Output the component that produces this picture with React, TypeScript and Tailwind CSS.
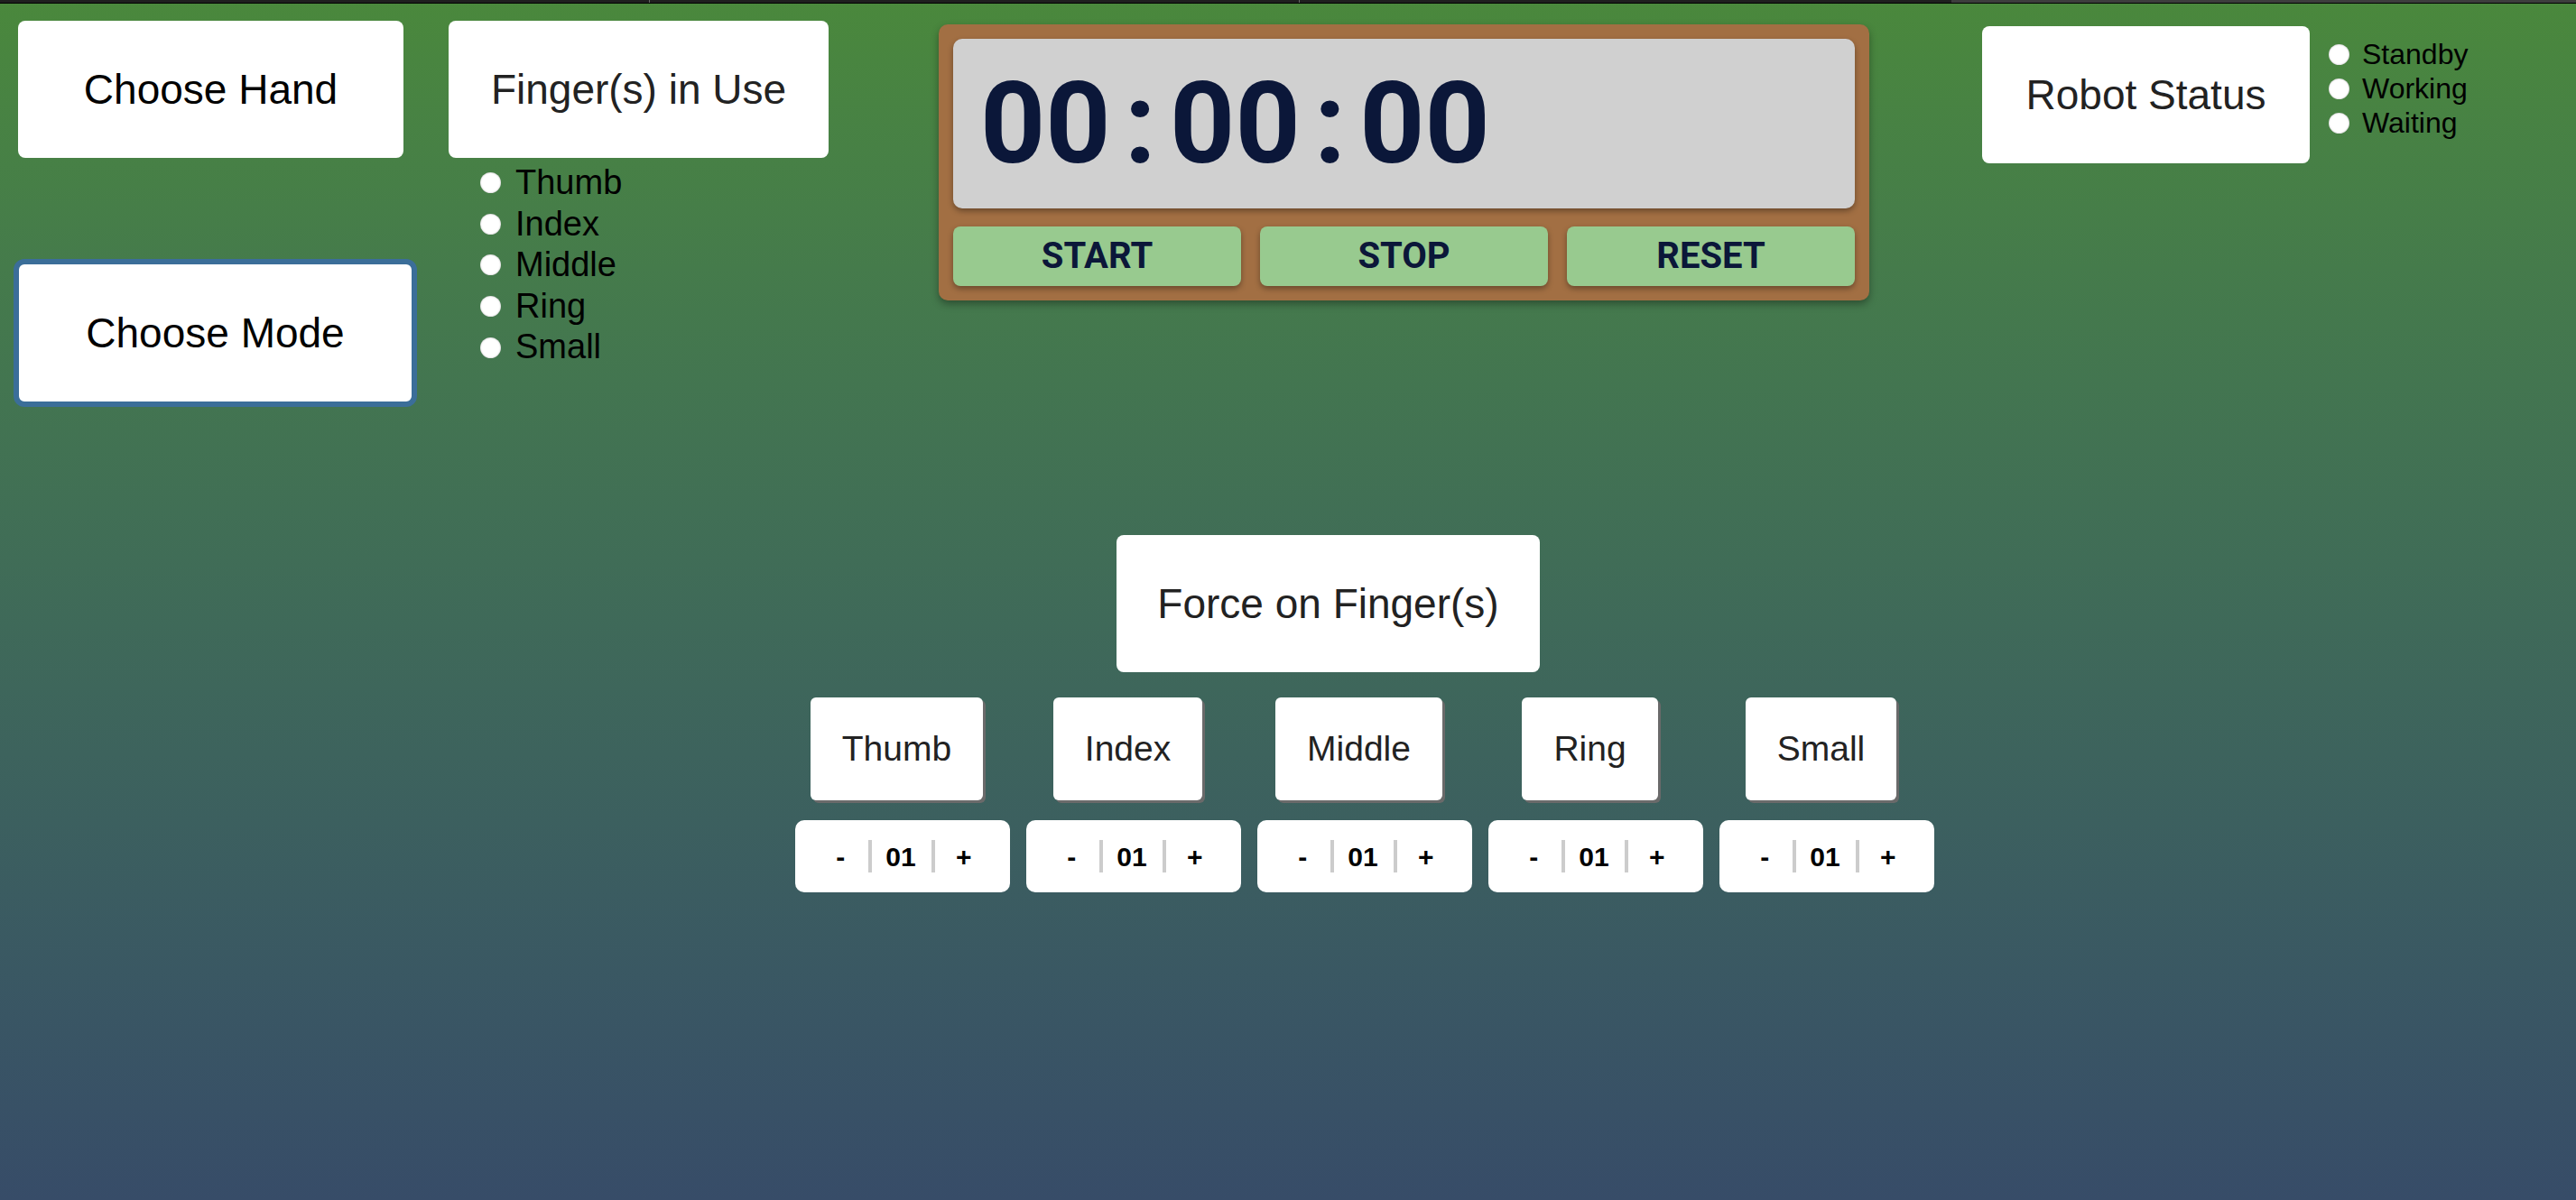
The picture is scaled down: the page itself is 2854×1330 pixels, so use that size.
const fingers = ['Thumb', 'Index', 'Middle', 'Ring', 'Small']
const statuses = ['Standby', 'Working', 'Waiting']

function Radio() {
  return <span className="h-[23px] w-[23px] shrink-0 rounded-full bg-white shadow-[inset_0_0_2px_rgba(0,0,0,0.35)]" />
}

function Counter() {
  return (
    <div className="flex h-[80px] w-[238px] items-center justify-center rounded-[10px] bg-white text-[30px] font-bold text-black">
      <span className="w-[62px] text-center">-</span>
      <span className="h-[36px] w-[4px] bg-[#cccccc]" />
      <span className="pl-[15px] pr-[17px]">01</span>
      <span className="h-[36px] w-[4px] bg-[#cccccc]" />
      <span className="w-[64px] text-center">+</span>
    </div>
  )
}

export default function App() {
  return (
    <div className="min-h-[1330px] bg-gradient-to-b from-[#4a883c] to-[#374c68] font-['Liberation_Sans',Arial,sans-serif]">
      {/* window strip */}
      <div className="flex h-[4px] border-b border-black">
        <div className="w-[719px] bg-[#1f1f1f]" />
        <div className="w-[720px] border-l border-[#666] bg-[#1f1f1f]" />
        <div className="w-[723px] border-l border-[#666] bg-[#1f1f1f]" />
        <div className="flex-1 bg-[#3d3d3d]" />
      </div>

      {/* top row */}
      <div className="flex items-start pt-[19px]">
        {/* hand + mode */}
        <div className="ml-[20px] flex w-[427px] shrink-0 flex-col">
          <div className="flex h-[152px] w-[427px] items-center justify-center rounded-[8px] bg-white text-[46px] text-black">
            Choose Hand
          </div>
          <div className="-ml-[5px] mt-[112px] flex h-[164px] w-[447px] items-center justify-center rounded-[12px] border-[6px] border-[#3b6e99] bg-white text-[46px] text-black">
            Choose Mode
          </div>
        </div>

        {/* fingers in use */}
        <div className="ml-[50px] flex w-[421px] shrink-0 flex-col">
          <div className="flex h-[152px] items-center justify-center rounded-[8px] bg-white text-[46px] text-[#222]">
            Finger(s) in Use
          </div>
          <div className="mt-[5px] flex flex-col pl-[35px] text-[38px] leading-[45.6px] text-black">
            {fingers.map((f) => (
              <label key={f} className="flex items-center gap-[16px]">
                <Radio />
                {f}
              </label>
            ))}
          </div>
        </div>

        {/* stopwatch */}
        <div className="ml-[122px] mt-[4px] w-[1031px] shrink-0 rounded-[10px] bg-[#a26f43] p-[16px] shadow-[0_4px_8px_rgba(0,0,0,0.35)]">
          <div className="flex h-[188px] items-center gap-[15px] rounded-[10px] bg-[#d0d0d0] pl-[30px] font-['Roboto',sans-serif] text-[126px] font-bold leading-none text-[#0b1739] shadow-[0_3px_6px_rgba(0,0,0,0.35)]">
            <span>00</span>
            <span>:</span>
            <span>00</span>
            <span>:</span>
            <span>00</span>
          </div>
          <div className="mt-[20px] grid h-[66px] grid-cols-3 gap-[21px] font-['Roboto',sans-serif] text-[40px] font-bold text-[#0b1739]">
            {['START', 'STOP', 'RESET'].map((b) => (
              <button key={b} className="flex items-center justify-center rounded-[8px] bg-[#98ca8f] shadow-[0_3px_6px_rgba(0,0,0,0.35)]">
                {b}
              </button>
            ))}
          </div>
        </div>

        {/* robot status */}
        <div className="ml-[125px] mt-[6px] flex h-[152px] w-[363px] shrink-0 items-center justify-center rounded-[8px] bg-white text-[46px] text-[#222]">
          Robot Status
        </div>
        <div className="ml-[21px] mt-[18px] flex flex-col text-[32px] leading-[38px] text-black">
          {statuses.map((s) => (
            <label key={s} className="flex items-center gap-[14px]">
              <Radio />
              {s}
            </label>
          ))}
        </div>
      </div>

      {/* force section */}
      <div className="ml-[881px] mt-[142px] flex w-[1262px] flex-col">
        <div className="ml-[356px] flex h-[152px] w-[469px] items-center justify-center rounded-[8px] bg-white text-[46px] text-[#222]">
          Force on Finger(s)
        </div>
        <div className="mt-[28px] grid grid-cols-5 gap-[18px]">
          {fingers.map((f) => (
            <div key={f} className="flex justify-center pr-[13px]">
              <button className="flex h-[114px] items-center rounded-[6px] bg-white px-[35px] text-[39px] text-[#222] shadow-[3px_3px_0_#6a6a6a]">
                {f}
              </button>
            </div>
          ))}
        </div>
        <div className="mt-[22px] grid grid-cols-5 gap-[18px]">
          {fingers.map((f) => (
            <Counter key={f} />
          ))}
        </div>
      </div>
    </div>
  )
}
